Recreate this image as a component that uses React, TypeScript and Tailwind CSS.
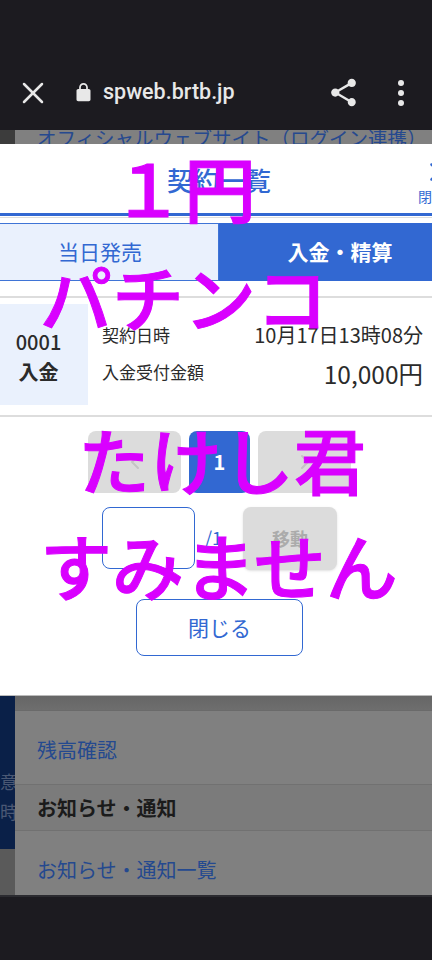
import React from 'react'
import { X, ChevronLeft, ChevronRight } from 'lucide-react'

const jp = "font-['Noto_Sans_CJK_JP','Noto_Sans',sans-serif]"

const ShareIcon = () => (
    <svg viewBox="0 0 24 24" className="w-[33px] h-[33px] fill-[#e8e8e8]">
        <path d="M18 16.08c-.76 0-1.44.3-1.96.77L8.91 12.7c.05-.23.09-.46.09-.7s-.04-.47-.09-.7l7.05-4.11c.54.5 1.25.81 2.04.81 1.66 0 3-1.34 3-3s-1.34-3-3-3-3 1.34-3 3c0 .24.04.47.09.7L8.04 9.81C7.5 9.31 6.79 9 6 9c-1.66 0-3 1.34-3 3s1.34 3 3 3c.79 0 1.5-.31 2.04-.81l7.12 4.16c-.05.21-.08.43-.08.65 0 1.61 1.31 2.92 2.92 2.92s2.92-1.31 2.92-2.92-1.31-2.92-2.92-2.92z" />
    </svg>
)

const LockIcon = () => (
    <svg viewBox="0 0 24 24" className="w-[21px] h-[21px] fill-[#e8e8e8]">
        <path d="M18 8h-1V6c0-2.76-2.24-5-5-5S7 3.24 7 6v2H6c-1.1 0-2 .9-2 2v10c0 1.1.9 2 2 2h12c1.1 0 2-.9 2-2V10c0-1.1-.9-2-2-2zM9 6c0-1.66 1.34-3 3-3s3 1.34 3 3v2H9V6z" />
    </svg>
)

const Overlay = ({ text, top, left }: { text: string; top: string; left: string }) => (
    <div className={`absolute ${top} ${left} text-[72px] leading-[80px] whitespace-nowrap font-medium text-[#d900ff] [-webkit-text-stroke:1px_#d900ff] ${jp}`}>
        {text}
    </div>
)

const App = () => {
    return (
        <div className={`relative w-[432px] h-[960px] overflow-hidden flex flex-col bg-[#1c1b20] ${jp}`}>
            {/* browser bar */}
            <div className="h-[130px] shrink-0 flex items-center pt-[55px] bg-[#1c1b20]">
                <X className="ml-[15px] w-[36px] h-[36px] text-[#e8e8e8]" strokeWidth={1.7} />
                <div className="ml-[22px]"><LockIcon /></div>
                <span className="ml-[9px] font-['Roboto',sans-serif] font-medium text-[21.5px] text-[#e8e8e8]">spweb.brtb.jp</span>
                <div className="ml-auto mr-[28px] flex items-center gap-[38px]">
                    <ShareIcon />
                    <div className="flex flex-col gap-[4px]">
                        <span className="w-[6px] h-[6px] rounded-full bg-[#e8e8e8]" />
                        <span className="w-[6px] h-[6px] rounded-full bg-[#e8e8e8]" />
                        <span className="w-[6px] h-[6px] rounded-full bg-[#e8e8e8]" />
                    </div>
                </div>
            </div>

            {/* dimmed page above the modal */}
            <div className="h-[14px] shrink-0 flex overflow-hidden">
                <div className="w-[15px] bg-[#3c3c3c]" />
                <div className="flex-1 bg-[#808080] pl-[22px] text-[19.5px] leading-[28px] -mt-[6px] whitespace-nowrap text-[#26498f]">
                    オフィシャルウェブサイト（ログイン連携）
                </div>
            </div>

            {/* modal */}
            <div className="h-[552px] shrink-0 bg-white overflow-hidden border-b border-[#bbbbbb]">
                <div className="w-[460px] -ml-[11px]">
                    <div className="relative h-[72px] pt-[2px] flex items-center justify-center text-[26px] font-medium text-[#3268d2] border-b-[3px] border-[#3268d2]">
                        契約一覧
                        <div className="absolute left-[429px] top-[13px] w-[42px] flex flex-col items-center text-[#3268d2]">
                            <X className="w-[30px] h-[30px]" strokeWidth={2} />
                            <span className="text-[14px] leading-[16px] font-normal mt-[1px]">閉じる</span>
                        </div>
                    </div>
                    <div className="h-[1px] mt-[1px] bg-[#dddddd]" />
                    <div className="mt-[5px] h-[58px] flex text-[21px]">
                        <div className="w-[230px] flex items-center justify-center bg-[#eaf1fd] border border-[#3f74d6] text-[#3268d2] pr-[8px]">当日発売</div>
                        <div className="w-[230px] flex items-center justify-center bg-[#3268d2] text-white font-bold pl-[12px]">入金・精算</div>
                    </div>
                    <div className="h-[2px] mt-[15px] bg-[#dddddd]" />
                    <div className="mt-[6px] h-[101px] flex text-[#2b2b2b]">
                        <div className="w-[99px] bg-[#eaf1fd] flex flex-col items-center justify-center pt-[4px] text-[20px] leading-[30px] font-medium">
                            <span>0001</span>
                            <span className="font-bold">入金</span>
                        </div>
                        <div className="w-[321px] ml-[14px] pt-[18px] flex flex-col">
                            <div className="h-[26px] flex items-center justify-between">
                                <span className="text-[17px]">契約日時</span>
                                <span className="text-[20px]">10月17日13時08分</span>
                            </div>
                            <div className="mt-[11px] h-[26px] flex items-center justify-between">
                                <span className="text-[17px]">入金受付金額</span>
                                <span className="text-[24.5px] mt-[4px]">10,000円</span>
                            </div>
                        </div>
                    </div>
                    <div className="h-[2px] mt-[10px] bg-[#dddddd]" />

                    {/* pager */}
                    <div className="mt-[14px] ml-[99px] flex gap-[8px]">
                        <div className="w-[93px] h-[62px] rounded-lg bg-[#dcdcdc] flex items-center justify-center">
                            <ChevronLeft className="w-[24px] h-[24px] text-[#c4c4c4]" />
                        </div>
                        <div className="w-[61px] h-[62px] rounded-lg bg-[#3268d2] flex items-center justify-center text-white font-bold text-[20px]">1</div>
                        <div className="w-[93px] h-[62px] rounded-lg bg-[#dcdcdc] flex items-center justify-center">
                            <ChevronRight className="w-[24px] h-[24px] text-[#c4c4c4]" />
                        </div>
                    </div>
                    <div className="mt-[14px] ml-[113px] flex items-start">
                        <div className="w-[93px] h-[62px] rounded-lg border border-[#3268d2] bg-white" />
                        <span className="ml-[10px] mt-[17px] w-[38px] text-[18px] text-[#3268d2]">/1</span>
                        <div className="w-[94px] h-[63px] rounded-lg bg-[#dcdcdc] shadow-sm flex items-center justify-center text-[#ababab] font-bold text-[18px]">移動</div>
                    </div>
                    <div className="mt-[29px] ml-[147px] w-[167px] h-[57px] rounded-lg border border-[#3268d2] flex items-center justify-center text-[21px] text-[#3268d2]">
                        閉じる
                    </div>
                </div>
            </div>

            {/* dimmed page below the modal */}
            <div className="h-[199px] shrink-0 flex overflow-hidden">
                <div className="w-[15px] shrink-0 flex flex-col">
                    <div className="h-[153px] bg-[#0a2048] overflow-hidden flex flex-col items-end pt-[70px] text-[18px] leading-[30px] text-[#4a5874]">
                        <span className="-mr-[3px]">意</span>
                        <span className="-mr-[3px]">時</span>
                    </div>
                    <div className="flex-1 bg-[#5a5a5a]" />
                </div>
                <div className="flex-1 flex flex-col bg-[#808080]">
                    <div className="h-[15px] bg-gradient-to-b from-[#666666] to-[#6e6e6e] border-b border-[#6a6a6a]" />
                    <div className="h-[74px] pl-[22px] pt-[4px] flex items-center text-[20px] text-[#24498f] border-b border-[#717171]">残高確認</div>
                    <div className="h-[46px] pl-[22px] flex items-center text-[20px] font-bold text-[#1b1b1b] bg-[#7b7b7b] border-b border-[#717171]">お知らせ・通知</div>
                    <div className="flex-1 pl-[22px] flex items-center pt-[14px] text-[20px] text-[#24498f]">お知らせ・通知一覧</div>
                </div>
            </div>
            <div className="flex-1 bg-[#1c1b20] border-t-2 border-[#2b2b30]" />

            <Overlay text="１円" top="top-[146px]" left="left-[112px]" />
            <Overlay text="パチンコ" top="top-[255px]" left="left-[40px]" />
            <Overlay text="たけし君" top="top-[418px]" left="left-[78px]" />
            <Overlay text="すみません" top="top-[524px]" left="left-[40px]" />
        </div>
    )
}

export default App
